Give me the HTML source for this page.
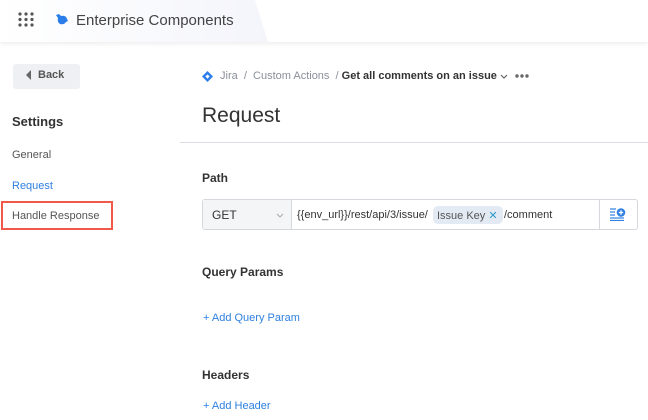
<!DOCTYPE html>
<html><head><style>
*{margin:0;padding:0;box-sizing:border-box}
body{width:648px;height:420px;overflow:hidden;background:#fff;font-family:"Liberation Sans",Arial,sans-serif;position:relative;color:#333}
.hdr{position:absolute;left:0;top:0;width:648px;height:42px;background:#fff;box-shadow:0 2px 4px rgba(0,0,0,0.07)}
.hbg{position:absolute;left:0;top:0;width:270px;height:42px;background:linear-gradient(90deg,#fff 0%,#f4f5fb 100%);clip-path:polygon(0 0,255px 0,268px 42px,0 42px)}
.a{position:absolute;white-space:nowrap}
</style></head><body>
<div class="hdr"><div class="hbg"></div></div>
<svg class="a" style="left:18px;top:12px" width="17" height="15" viewBox="0 0 17 15" fill="#555">
<circle cx="2" cy="2" r="1.6"/><circle cx="8" cy="2" r="1.6"/><circle cx="14" cy="2" r="1.6"/>
<circle cx="2" cy="7.5" r="1.6"/><circle cx="8" cy="7.5" r="1.6"/><circle cx="14" cy="7.5" r="1.6"/>
<circle cx="2" cy="13" r="1.6"/><circle cx="8" cy="13" r="1.6"/><circle cx="14" cy="13" r="1.6"/></svg>
<svg class="a" style="left:55px;top:13px" width="14" height="13" viewBox="0 0 14 13"><path d="M1 2 L4 1 L6 3 Q11 2 12 6 L13 8 L11 9 Q9 12 5 11 Q2 9 3 5 Z" fill="#2b7de9"/></svg>
<div class="a" style="left:76px;top:12px;font-size:15px;color:#444">Enterprise Components</div>

<div class="a" style="left:13px;top:64px;width:67px;height:25px;background:#eff0f3;border-radius:3px"></div>
<div class="a" style="left:26px;top:70px;width:0;height:0;border-top:5px solid transparent;border-bottom:5px solid transparent;border-right:5px solid #666"></div>
<div class="a" style="left:38px;top:69px;font-size:11px;color:#555;font-weight:bold">Back</div>

<div class="a" style="left:12px;top:114px;font-size:13px;font-weight:bold;color:#333">Settings</div>
<div class="a" style="left:12px;top:149px;font-size:11px;color:#555">General</div>
<div class="a" style="left:12px;top:180px;font-size:11px;color:#2f80e0">Request</div>
<div class="a" style="left:1px;top:201px;width:112px;height:29px;border:2px solid #f0584a"></div>
<div class="a" style="left:12px;top:210px;font-size:11px;color:#555">Handle Response</div>

<svg class="a" style="left:202px;top:71px" width="11" height="11" viewBox="0 0 11 11"><path d="M5.5 0 L11 5.5 L5.5 11 L0 5.5Z" fill="#2b7de9"/><rect x="4" y="4" width="3" height="3" fill="#fff" transform="rotate(45 5.5 5.5)"/></svg>
<div class="a" style="left:220px;top:70px;font-size:11px;color:#8a8f99">Jira &nbsp;/ &nbsp;Custom Actions &nbsp;/ <b style="color:#333">Get all comments on an issue</b> <svg width="8" height="5" viewBox="0 0 8 5" style="vertical-align:middle"><path d="M1 1 L4 4 L7 1" stroke="#666" stroke-width="1.2" fill="none"/></svg></div>
<svg class="a" style="left:515px;top:74px" width="14" height="4" viewBox="0 0 14 4" fill="#666"><circle cx="2" cy="2" r="1.7"/><circle cx="7" cy="2" r="1.7"/><circle cx="12" cy="2" r="1.7"/></svg>

<div class="a" style="left:202px;top:104px;font-size:21px;color:#333">Request</div>
<div class="a" style="left:180px;top:142px;width:468px;height:1px;background:#dcdde2"></div>

<div class="a" style="left:202px;top:171px;font-size:12px;font-weight:bold;color:#333">Path</div>
<div class="a" style="left:202px;top:199px;width:436px;height:31px;border:1px solid #d6d8de;border-radius:3px"></div>
<div class="a" style="left:203px;top:200px;width:89px;height:29px;background:#f4f5f7;border-right:1px solid #d6d8de"></div>
<div class="a" style="left:212px;top:208px;font-size:12px;color:#333">GET</div>
<svg class="a" style="left:276px;top:213px" width="8" height="5" viewBox="0 0 8 5"><path d="M1 1 L4 4 L7 1" stroke="#aaa" stroke-width="1" fill="none"/></svg>
<div class="a" style="left:297px;top:209px;font-size:11px;color:#333">{{env_url}}/rest/api/3/issue/</div>
<div class="a" style="left:433px;top:206px;width:70px;height:18px;background:#e3eaf4;border-radius:5px"></div>
<div class="a" style="left:437px;top:209px;font-size:11px;color:#555">Issue Key <span style="color:#2b9ac8">✕</span></div>
<div class="a" style="left:504px;top:209px;font-size:11px;color:#333">/comment</div>
<div class="a" style="left:599px;top:200px;width:1px;height:29px;background:#d6d8de"></div>
<svg class="a" style="left:610px;top:207px" width="16" height="14" viewBox="0 0 16 14"><g stroke="#2f80e0" stroke-width="1.2"><line x1="0" y1="2" x2="6" y2="2"/><line x1="0" y1="5" x2="5" y2="5"/><line x1="0" y1="8" x2="5" y2="8"/><line x1="0" y1="11" x2="14" y2="11"/><line x1="0" y1="13.5" x2="14" y2="13.5"/></g><circle cx="11" cy="5.5" r="4.3" fill="#2f80e0"/><path d="M11 3.3v4.4M8.8 5.5h4.4" stroke="#fff" stroke-width="1.3"/></svg>

<div class="a" style="left:202px;top:265px;font-size:12px;font-weight:bold;color:#333">Query Params</div>
<div class="a" style="left:203px;top:312px;font-size:11px;color:#2f80e0">+ Add Query Param</div>
<div class="a" style="left:202px;top:368px;font-size:12px;font-weight:bold;color:#333">Headers</div>
<div class="a" style="left:203px;top:400px;font-size:11px;color:#2f80e0">+ Add Header</div>
</body></html>
